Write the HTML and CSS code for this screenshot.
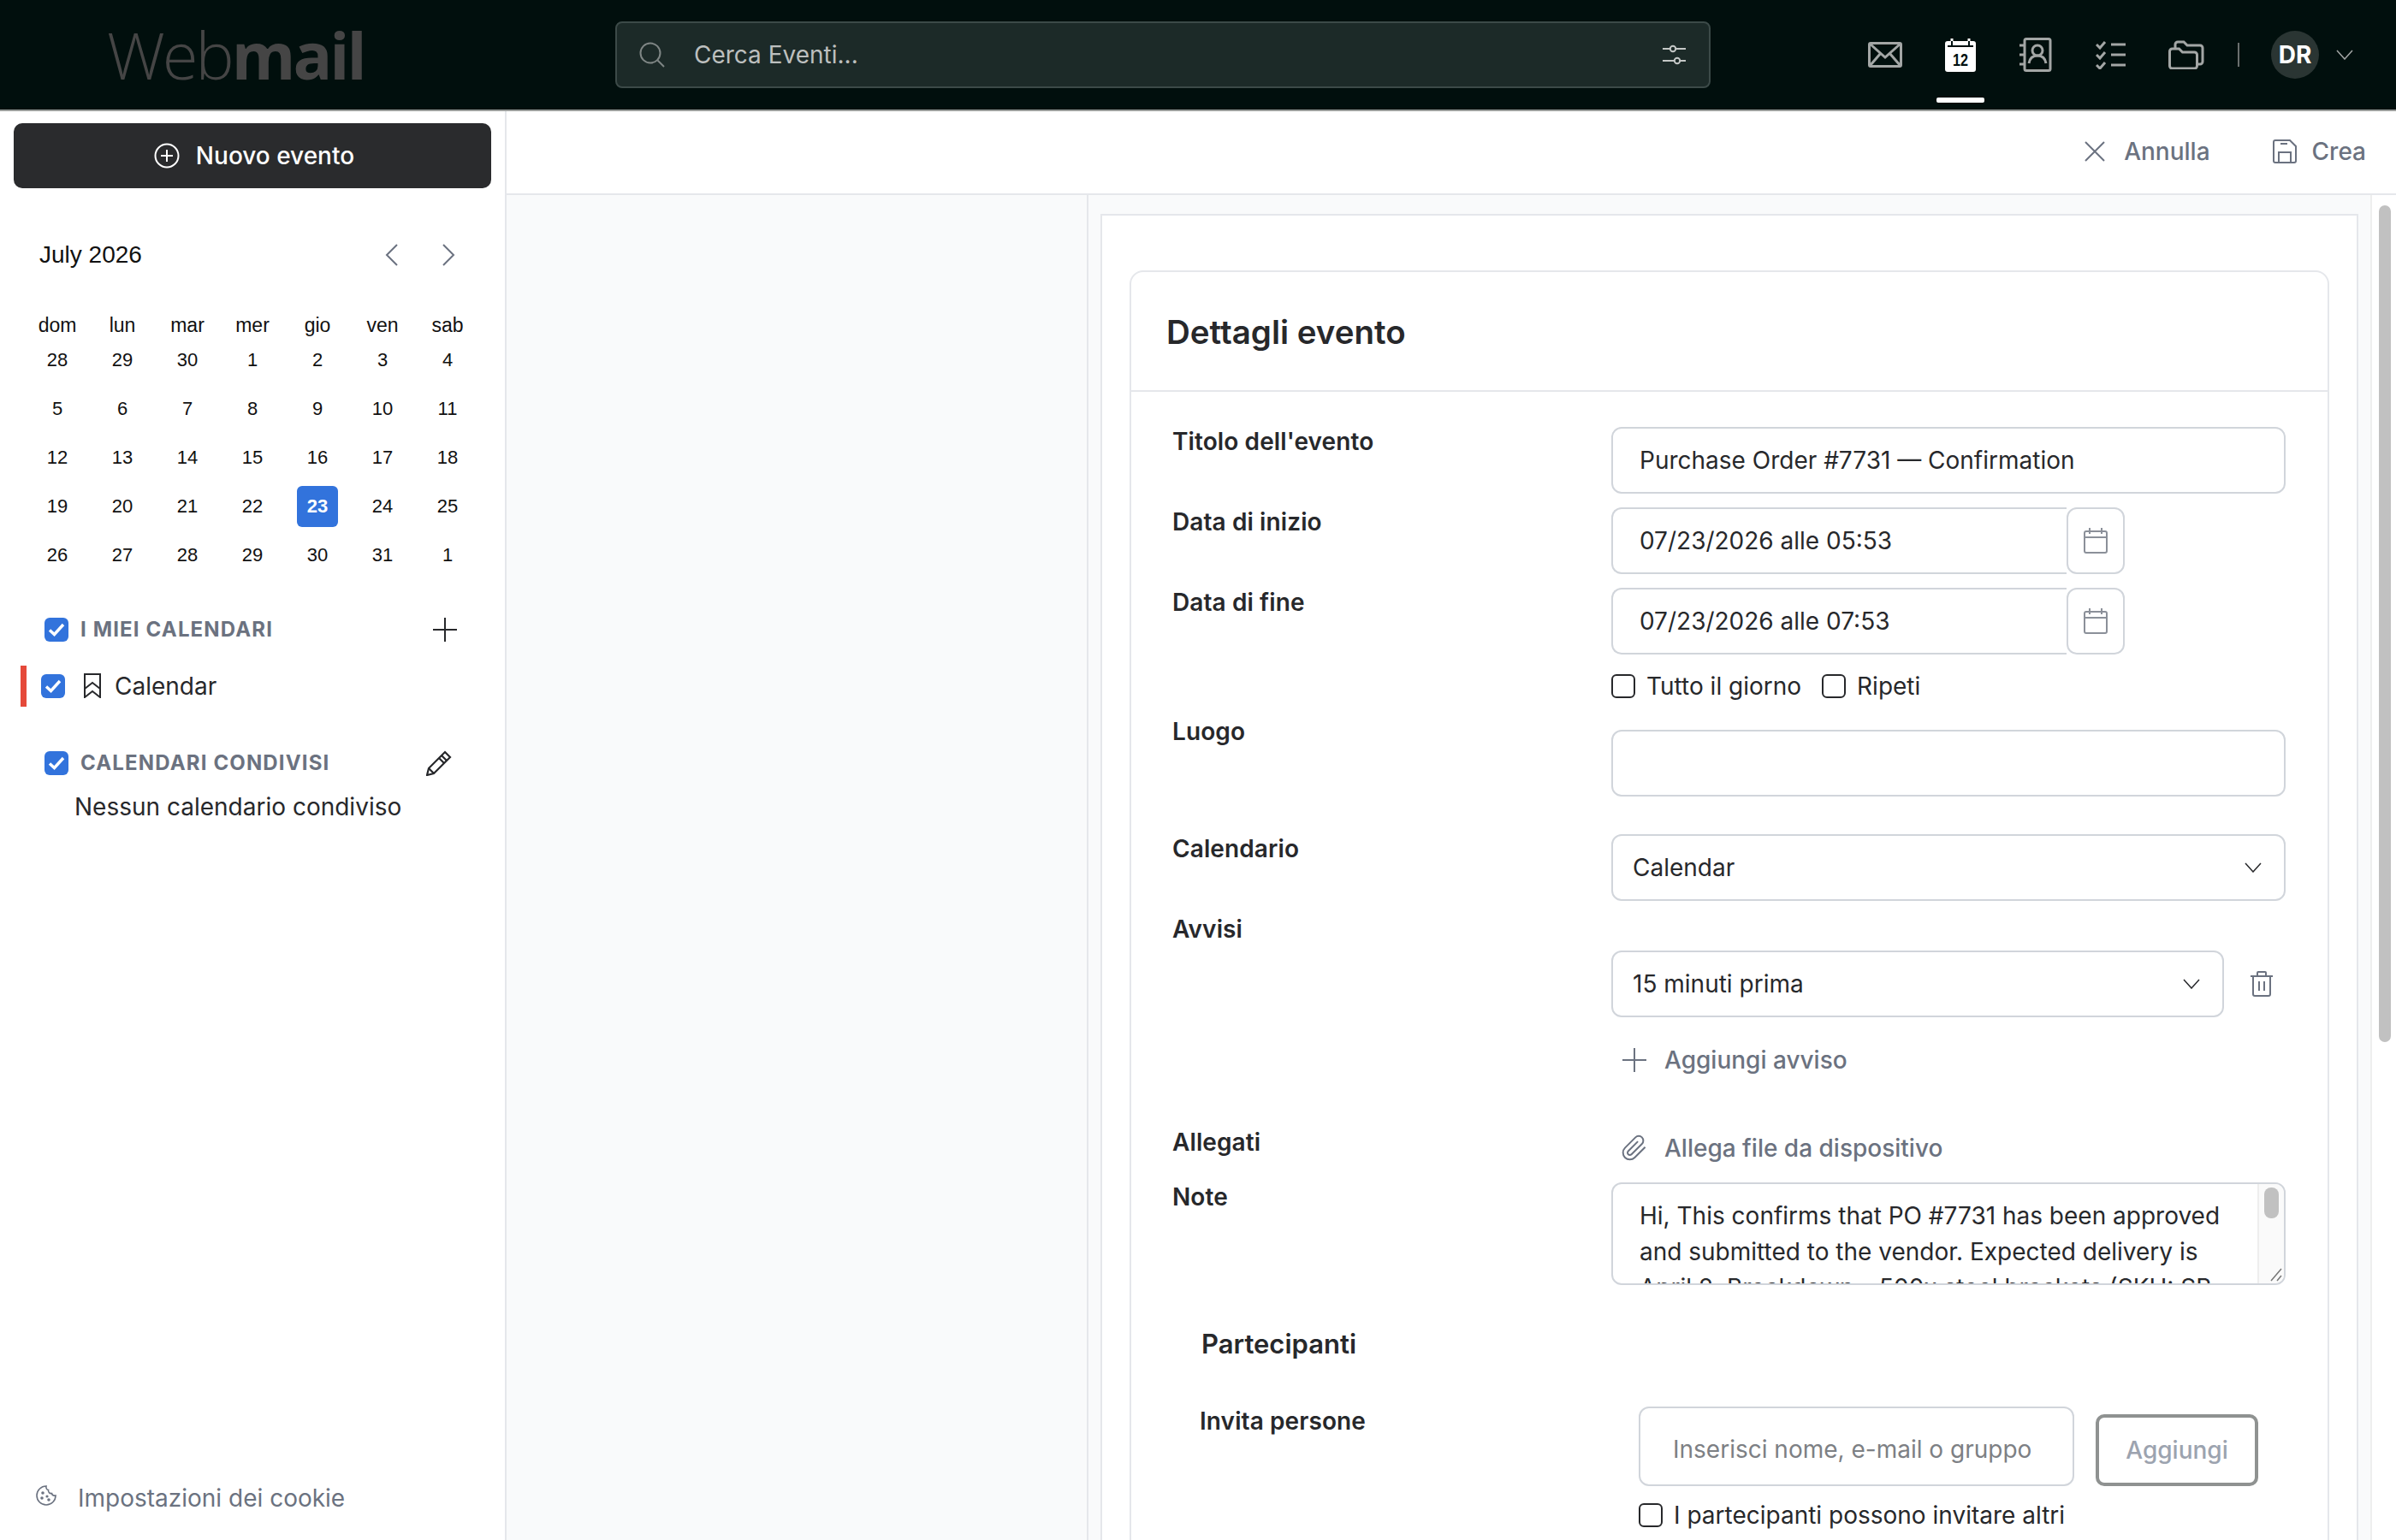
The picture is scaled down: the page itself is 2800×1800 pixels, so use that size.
FILE: index.html
```html
<!DOCTYPE html>
<html lang="it">
  <head>
    <meta charset="UTF-8" />
    <title>Webmail</title>
    <link rel="stylesheet" href="styles.css">
  </head>
  <body>
    <header class="topbar">
      <div class="logo"><span class="logo-light">Web</span><span class="logo-bold">mail</span></div>
      <div class="search">
        <svg class="search-icon" width="30" height="30" viewBox="0 0 30 30" fill="none" stroke="#7f8685" stroke-width="2"><circle cx="13" cy="13" r="11.5"/><path d="M21.5 21.5 29 29"/></svg>
        <span class="search-text">Cerca Eventi...</span>
        <svg class="search-filter" width="28" height="24" viewBox="0 0 28 24" fill="none" stroke="#c4c7c6" stroke-width="2"><path d="M0 5h9M15 5h12M0 19h13M20 19h7"/><circle cx="12" cy="5" r="3.2"/><circle cx="17" cy="19" r="3.2"/></svg>
      </div>
      <nav class="apps">
        <div class="app">
          <svg width="40" height="30" viewBox="0 0 40 30" fill="none" stroke="#a3a6a5" stroke-width="3"><rect x="1.5" y="1.5" width="37" height="27" rx="1.5"/><path d="M2 2 20 18 38 2M2 28 15 13M38 28 25 13"/></svg>
        </div>
        <div class="app active">
          <svg width="36" height="40" viewBox="0 0 36 40"><rect x="0" y="4" width="36" height="36" rx="3" fill="#fff"/><path d="M8 1v9M28 1v9" stroke="#fff" stroke-width="3"/><path d="M8 4v5M28 4v5M3 10h30" stroke="#001010" stroke-width="2"/><text x="18" y="33" text-anchor="middle" textLength="18" lengthAdjust="spacingAndGlyphs" class="app-date">12</text></svg>
        </div>
        <div class="app">
          <svg width="38" height="40" viewBox="0 0 38 40" fill="none" stroke="#a3a6a5" stroke-width="3"><rect x="6" y="1.5" width="30" height="37" rx="2"/><path d="M0 9h6M0 20h6M0 31h6"/><circle cx="21" cy="15" r="6"/><path d="M11 30c1-6 5-9 10-9s9 3 10 9"/></svg>
        </div>
        <div class="app">
          <svg width="36" height="34" viewBox="0 0 36 34" fill="none" stroke="#a3a6a5" stroke-width="3"><path d="M1 5l4 4 6-7M1 17l4 4 6-7M1 29l4 4 6-7"/><path d="M18 5h17M18 17h17M18 29h17"/></svg>
        </div>
        <div class="app">
          <svg width="42" height="34" viewBox="0 0 42 34" fill="none" stroke="#a3a6a5" stroke-width="3"><path d="M1.5 13a3 3 0 0 1 3-3h8l4 4h14a3 3 0 0 1 3 3v13a3 3 0 0 1-3 3h-26a3 3 0 0 1-3-3z"/><path d="M8 9V5a3 3 0 0 1 3-3h7l4 4h15a3 3 0 0 1 3 3v16a3 3 0 0 1-3 3h-3"/></svg>
        </div>
      </nav>
      <div class="topbar-sep"></div>
      <div class="avatar">DR</div>
      <svg class="avatar-caret" width="20" height="12" viewBox="0 0 20 12" fill="none" stroke="#a3a6a5" stroke-width="1.5"><path d="M1 1l9 10 9-10"/></svg>
    </header>

    <div class="app-body">
      <aside class="sidebar">
        <button class="new-event">
          <svg width="30" height="30" viewBox="0 0 30 30" fill="none" stroke="#fff" stroke-width="2"><circle cx="15" cy="15" r="13.5"/><path d="M15 8v14M8 15h14"/></svg>
          Nuovo evento
        </button>

        <div class="month-head">
          <span class="month-name">July 2026</span>
          <div class="month-nav">
            <svg width="16" height="26" viewBox="0 0 16 26" fill="none" stroke="#6b7280" stroke-width="2"><path d="M14 1 2 13l12 12"/></svg>
            <svg width="16" height="26" viewBox="0 0 16 26" fill="none" stroke="#6b7280" stroke-width="2"><path d="M2 1l12 12L2 25"/></svg>
          </div>
        </div>

        <div class="weekdays">
          <span>dom</span><span>lun</span><span>mar</span><span>mer</span><span>gio</span><span>ven</span><span>sab</span>
        </div>
        <div class="days">
          <span>28</span><span>29</span><span>30</span><span>1</span><span>2</span><span>3</span><span>4</span>
          <span>5</span><span>6</span><span>7</span><span>8</span><span>9</span><span>10</span><span>11</span>
          <span>12</span><span>13</span><span>14</span><span>15</span><span>16</span><span>17</span><span>18</span>
          <span>19</span><span>20</span><span>21</span><span>22</span><span class="today">23</span><span>24</span><span>25</span>
          <span>26</span><span>27</span><span>28</span><span>29</span><span>30</span><span>31</span><span>1</span>
        </div>

        <div class="cal-section first">
          <span class="check on"><svg width="20" height="16" viewBox="0 0 20 16" fill="none" stroke="#fff" stroke-width="3.4"><path d="M2 8.5l5.5 5L18 2"/></svg></span>
          <span class="cal-title">I MIEI CALENDARI</span>
          <svg class="cal-action" width="28" height="28" viewBox="0 0 28 28" fill="none" stroke="#27282b" stroke-width="2"><path d="M14 0v28M0 14h28"/></svg>
        </div>
        <div class="cal-row">
          <span class="cal-bar"></span>
          <span class="check on"><svg width="20" height="16" viewBox="0 0 20 16" fill="none" stroke="#fff" stroke-width="3.4"><path d="M2 8.5l5.5 5L18 2"/></svg></span>
          <svg class="cal-mark" width="20" height="29" viewBox="0 0 20 29" fill="none" stroke="#27282b" stroke-width="2"><path d="M1 1h18v27l-9-7-9 7z"/><path d="M1 18l9-7 9 7"/></svg>
          <span>Calendar</span>
        </div>
        <div class="cal-section second">
          <span class="check on"><svg width="20" height="16" viewBox="0 0 20 16" fill="none" stroke="#fff" stroke-width="3.4"><path d="M2 8.5l5.5 5L18 2"/></svg></span>
          <span class="cal-title">CALENDARI CONDIVISI</span>
          <svg class="cal-action pencil" width="30" height="30" viewBox="0 0 30 30" fill="none" stroke="#27282b" stroke-width="2.2"><path d="M22 2l6 6L9 27l-8 2 2-8z"/><path d="M18 6l6 6M15 9l6 6M3 21l6 6"/></svg>
        </div>
        <div class="no-shared">Nessun calendario condiviso</div>

        <div class="cookie">
          <svg width="24" height="24" viewBox="0 0 24 24" fill="none" stroke="#6b7280" stroke-width="1.6"><path d="M12 1a11 11 0 1 0 11 11c-2 .5-4-.5-4.500-2.500C16 10 14 8 14.500 5.500 12.500 5.500 11.500 3 12 1z"/><circle cx="8" cy="9" r="1" fill="#6b7280"/><circle cx="7" cy="15" r="1" fill="#6b7280"/><circle cx="13" cy="13" r=".8" fill="#6b7280"/><circle cx="15" cy="17" r="1" fill="#6b7280"/></svg>
          <span>Impostazioni dei cookie</span>
        </div>
      </aside>

      <main class="main">
        <div class="toolbar">
          <button class="tool-btn">
            <svg width="24" height="24" viewBox="0 0 24 24" fill="none" stroke="#6b7280" stroke-width="2"><path d="M1 1l22 22M23 1 1 23"/></svg>
            Annulla
          </button>
          <button class="tool-btn save">
            <svg width="28" height="28" viewBox="0 0 28 28" fill="none" stroke="#6b7280" stroke-width="2"><path d="M3 1h17l7 7v17a2 2 0 0 1-2 2H3a2 2 0 0 1-2-2V3a2 2 0 0 1 2-2z"/><path d="M7 27V15h14v12M9 5h8"/></svg>
            Crea
          </button>
        </div>

        <div class="workspace">
          <div class="side-pane"></div>
          <div class="form-pane">
            <div class="sheet">
              <section class="card">
                <h2 class="card-title">Dettagli evento</h2>
                <div class="card-body">
                  <div class="row">
                    <label class="row-label">Titolo dell'evento</label>
                    <input class="field" value="Purchase Order #7731 — Confirmation">
                  </div>
                  <div class="row">
                    <label class="row-label">Data di inizio</label>
                    <div class="date-field">
                      <input class="field" value="07/23/2026 alle 05:53">
                      <span class="date-addon">
                        <svg width="28" height="30" viewBox="0 0 28 30" fill="none" stroke="#8b9099" stroke-width="2"><rect x="1" y="4" width="26" height="25" rx="2"/><path d="M1 11h26M7 0v7M21 0v7"/></svg>
                      </span>
                    </div>
                  </div>
                  <div class="row tight">
                    <label class="row-label">Data di fine</label>
                    <div class="date-field">
                      <input class="field" value="07/23/2026 alle 07:53">
                      <span class="date-addon">
                        <svg width="28" height="30" viewBox="0 0 28 30" fill="none" stroke="#8b9099" stroke-width="2"><rect x="1" y="4" width="26" height="25" rx="2"/><path d="M1 11h26M7 0v7M21 0v7"/></svg>
                      </span>
                    </div>
                  </div>
                  <div class="row checks-row">
                    <span></span>
                    <div class="checks">
                      <span class="check"></span><span class="check-text">Tutto il giorno</span>
                      <span class="check"></span><span class="check-text">Ripeti</span>
                    </div>
                  </div>
                  <div class="row wide-gap">
                    <label class="row-label luogo-label">Luogo</label>
                    <input class="field">
                  </div>
                  <div class="row">
                    <label class="row-label">Calendario</label>
                    <div class="select">
                      Calendar
                      <svg width="20" height="12" viewBox="0 0 20 12" fill="none" stroke="#27282b" stroke-width="1.5"><path d="M1 1l9 10 9-10"/></svg>
                    </div>
                  </div>
                  <div class="row alerts-row">
                    <label class="row-label">Avvisi</label>
                    <div class="alerts">
                      <div class="alert-line">
                        <div class="select">
                          15 minuti prima
                          <svg width="20" height="12" viewBox="0 0 20 12" fill="none" stroke="#27282b" stroke-width="1.5"><path d="M1 1l9 10 9-10"/></svg>
                        </div>
                        <svg class="trash" width="28" height="30" viewBox="0 0 28 30" fill="none" stroke="#6b7280" stroke-width="2"><path d="M1 6h26M9 6V2a1 1 0 0 1 1-1h8a1 1 0 0 1 1 1v4M4 6v21a2 2 0 0 0 2 2h16a2 2 0 0 0 2-2V6M11 12v11M17 12v11"/></svg>
                      </div>
                      <div class="link-line add-alert">
                        <svg width="28" height="28" viewBox="0 0 28 28" fill="none" stroke="#6b7280" stroke-width="2"><path d="M14 0v28M0 14h28"/></svg>
                        Aggiungi avviso
                      </div>
                    </div>
                  </div>
                  <div class="row attach-row">
                    <label class="row-label">Allegati</label>
                    <div class="link-line">
                      <svg class="clip" width="32" height="32" viewBox="0 0 24 24" fill="none" stroke="#6b7280" stroke-width="1.5"><path d="M21.44 11.05l-9.19 9.19a6 6 0 0 1-8.49-8.49l9.19-9.19a4 4 0 0 1 5.66 5.66l-9.2 9.19a2 2 0 0 1-2.83-2.83l8.49-8.48"/></svg>
                      Allega file da dispositivo
                    </div>
                  </div>
                  <div class="row">
                    <label class="row-label">Note</label>
                    <div class="notes">
                      <p class="notes-text">Hi, This confirms that PO #7731 has been approved and submitted to the vendor. Expected delivery is April 2. Breakdown – 500x steel brackets (SKU: SB-100)</p>
                      <div class="notes-bar"><span class="notes-thumb"></span></div>
                      <svg class="notes-grip" width="14" height="16" viewBox="0 0 14 16" fill="none" stroke="#777" stroke-width="1.500"><path d="M13 1 1 15M13 9l-5 6"/></svg>
                    </div>
                  </div>

                  <h3 class="people-title">Partecipanti</h3>
                  <div class="row invite-row">
                    <label class="row-label">Invita persone</label>
                    <div class="invite">
                      <input class="field invite-input" placeholder="Inserisci nome, e-mail o gruppo">
                      <button class="invite-btn">Aggiungi</button>
                    </div>
                  </div>
                  <div class="row invite-row invite-check">
                    <span></span>
                    <div class="checks">
                      <span class="check"></span><span class="check-text">I partecipanti possono invitare altri</span>
                    </div>
                  </div>
                </div>
              </section>
            </div>
          </div>
          <div class="scrollbar"><span class="scroll-thumb"></span></div>
        </div>
      </main>
    </div>
  </body>
</html>
```

FILE: styles.css
```css
* {
  box-sizing: border-box;
}

body {
  margin: 0;
  width: 2800px;
  height: 1800px;
  overflow: hidden;
  font-family: "Inter", "Liberation Sans", sans-serif;
  font-size: 28px;
  color: #27282b;
  background-color: #fff;
}

/* top bar */
.topbar {
  display: flex;
  align-items: center;
  height: 130px;
  background-color: #010f0d;
  border-bottom: 2px solid #9a9d9b;
}

.logo {
  width: 719px;
  padding-left: 125px;
  font-family: "Open Sans", sans-serif;
  font-size: 76px;
  line-height: 1;
  letter-spacing: -3px;
  color: #454545;
}

.logo-light {
  font-weight: 300;
}

.logo-bold {
  font-weight: 700;
}

.search {
  display: flex;
  align-items: center;
  width: 1280px;
  height: 78px;
  padding: 0 26px 0 26px;
  background-color: #1c2a28;
  border: 2px solid #3c4a48;
  border-radius: 8px;
}

.search-text {
  flex: 1;
  margin-left: 34px;
  color: #bcbfbe;
}

.apps {
  display: flex;
  margin-left: 160px;
}

.app {
  position: relative;
  display: flex;
  align-items: center;
  justify-content: center;
  width: 88px;
  height: 128px;
}

.app.active::after {
  content: "";
  position: absolute;
  left: 16px;
  right: 16px;
  bottom: 8px;
  height: 6px;
  border-radius: 2px;
  background-color: #fff;
}

.app-date {
  font-family: "Liberation Sans", sans-serif;
  font-size: 20px;
  font-weight: 700;
  fill: #001010;
}

.topbar-sep {
  width: 2px;
  height: 28px;
  margin-left: 16px;
  background-color: #6a6f6e;
}

.avatar {
  display: flex;
  align-items: center;
  justify-content: center;
  width: 56px;
  height: 56px;
  margin-left: 37px;
  border-radius: 50%;
  background-color: #2a3533;
  color: #fff;
  font-weight: 700;
}

.avatar-caret {
  margin-left: 20px;
}

/* page */
.app-body {
  display: flex;
  height: 1670px;
}

.sidebar {
  display: flex;
  flex-direction: column;
  width: 592px;
  border-right: 2px solid #e5e7eb;
}

.new-event {
  display: flex;
  align-items: center;
  justify-content: center;
  gap: 19px;
  width: 558px;
  height: 76px;
  margin: 14px 0 0 16px;
  padding: 0 0 0 4px;
  border: 0;
  border-radius: 10px;
  background-color: #2a2b2d;
  color: #fff;
  font-family: inherit;
  font-size: 28px;
  font-weight: 500;
}

.month-head {
  display: flex;
  align-items: center;
  justify-content: space-between;
  height: 40px;
  margin: 58px 58px 0 46px;
  font-family: "Liberation Sans", sans-serif;
  font-size: 28px;
  color: #111;
}

.month-nav {
  display: flex;
  gap: 50px;
}

.weekdays,
.days {
  display: grid;
  grid-template-columns: repeat(7, 76px);
  width: 532px;
  margin-left: 29px;
  font-family: "Liberation Sans", sans-serif;
  font-size: 22px;
  text-align: center;
  color: #111;
}

.weekdays {
  height: 25px;
  margin-top: 50px;
  font-size: 23px;
  line-height: 25px;
}

.days {
  grid-auto-rows: 56.8px;
}

.days span {
  display: flex;
  align-items: center;
  justify-content: center;
}

.days .today {
  width: 48px;
  height: 48px;
  margin: auto;
  border-radius: 6px;
  background-color: #3273dc;
  color: #fff;
  font-weight: 700;
}

.check {
  display: inline-flex;
  flex: none;
  align-items: center;
  justify-content: center;
  width: 28px;
  height: 28px;
  border: 2px solid #27282b;
  border-radius: 6px;
}

.check.on {
  border: 0;
  background-color: #3273dc;
}

.cal-section {
  display: flex;
  align-items: center;
  height: 40px;
  padding: 0 56px 0 52px;
}

.cal-section.first {
  margin-top: 39px;
}

.cal-section.second {
  margin-top: 46px;
}

.cal-title {
  flex: 1;
  margin-left: 14px;
  font-size: 24px;
  font-weight: 700;
  letter-spacing: 1.15px;
  color: #6b7280;
}

.cal-action {
  flex: none;
}

.pencil {
  margin-right: 6px;
}

.cal-row {
  display: flex;
  align-items: center;
  height: 48px;
  margin: 22px 0 0 24px;
}

.cal-bar {
  width: 7px;
  height: 48px;
  margin-right: 17px;
  background-color: #e5493a;
}

.cal-mark {
  margin: 0 16px 0 22px;
}

.no-shared {
  margin: 13px 0 0 87px;
  line-height: 36px;
}

.cookie {
  display: flex;
  align-items: center;
  gap: 25px;
  margin: auto 0 31px 42px;
  line-height: 36px;
  color: #6b7280;
}

.cookie svg {
  margin-bottom: 6px;
}

/* main column */
.main {
  display: flex;
  flex-direction: column;
  flex: 1;
  min-width: 0;
}

.toolbar {
  display: flex;
  flex: none;
  align-items: center;
  justify-content: flex-end;
  gap: 73px;
  height: 98px;
  padding: 0 35px 2px 0;
  border-bottom: 2px solid #e5e7eb;
}

.tool-btn {
  display: flex;
  align-items: center;
  gap: 22px;
  padding: 0;
  border: 0;
  background: none;
  color: #6b7280;
  font-family: inherit;
  font-size: 28px;
  font-weight: 500;
}

.tool-btn.save {
  gap: 18px;
}

.workspace {
  display: flex;
  flex: 1;
  min-height: 0;
  background-color: #f9fafb;
}

.side-pane {
  width: 680px;
  border-right: 2px solid #e5e7eb;
}

.form-pane {
  flex: 1;
  min-width: 0;
  padding: 22px 14px 0;
  overflow: hidden;
}

.sheet {
  padding: 64px 32px 0;
  background-color: #fff;
  border: 2px solid #e5e7eb;
  border-bottom: 0;
}

.card {
  border: 2px solid #e5e7eb;
  border-radius: 16px;
}

.card-title {
  height: 140px;
  margin: 0;
  padding: 0 0 0 41px;
  border-bottom: 2px solid #e5e7eb;
  font-size: 38.500px;
  font-weight: 600;
  line-height: 140px;
  color: #27282b;
}

.card-body {
  padding: 41px 49px 100px 48px;
}

.row {
  display: grid;
  grid-template-columns: 513px 1fr;
  margin-bottom: 16px;
}

.row.tight {
  margin-bottom: 19px;
}

.row-label {
  font-weight: 600;
  line-height: 34px;
  letter-spacing: 0.1px;
}

.luogo-label {
  margin-top: -15px;
}

.field {
  width: 100%;
  height: 78px;
  padding: 0 31px;
  border: 2px solid #d1d5db;
  border-radius: 12px;
  background-color: #fff;
  font-family: inherit;
  font-size: 28px;
  color: #27282b;
}

.date-field {
  display: flex;
  width: 600px;
}

.date-field .field {
  flex: 1;
  min-width: 0;
  border-right: 0;
  border-radius: 12px 0 0 12px;
}

.date-addon {
  display: flex;
  flex: none;
  align-items: center;
  justify-content: center;
  width: 68px;
  border: 2px solid #d1d5db;
  border-radius: 12px;
}

.checks-row {
  height: 36px;
  margin-bottom: 33px;
}

.checks {
  display: flex;
  align-items: center;
  height: 36px;
}

.check-text {
  margin: 0 24px 0 13px;
}

.wide-gap {
  margin-bottom: 44px;
}

.select {
  display: flex;
  align-items: center;
  justify-content: space-between;
  height: 78px;
  padding: 0 26px 0 23px;
  border: 2px solid #d1d5db;
  border-radius: 12px;
}

.alerts-row {
  margin-bottom: 55px;
}

.alerts {
  padding-top: 42px;
}

.alert-line {
  display: flex;
  align-items: center;
}

.alert-line .select {
  width: 716px;
}

.trash {
  margin-left: 30px;
}

.link-line {
  display: flex;
  align-items: center;
  gap: 21px;
  height: 48px;
  padding-left: 13px;
  font-weight: 500;
  color: #6b7280;
}

.clip {
  margin: 0 -2px;
}

.add-alert {
  margin-top: 26px;
}

.notes {
  position: relative;
  height: 120px;
  padding: 16px 60px 0 31px;
  overflow: hidden;
  border: 2px solid #d1d5db;
  border-radius: 12px;
}

.notes-text {
  margin: 0;
  line-height: 42px;
}

.notes-bar {
  position: absolute;
  top: 0;
  right: 0;
  bottom: 0;
  width: 31px;
  padding: 4px 6px;
  background-color: #fafafa;
  border-left: 2px solid #eee;
}

.notes-thumb {
  display: block;
  height: 36px;
  border-radius: 8px;
  background-color: #c1c1c1;
}

.notes-grip {
  position: absolute;
  right: 2px;
  bottom: 2px;
}

.people-title {
  margin: 49px 0 53px 34px;
  font-size: 31px;
  font-weight: 600;
  line-height: 40px;
}

.invite-row {
  grid-template-columns: 513px 1fr;
  margin-left: 32px;
}

.invite {
  display: flex;
  align-items: flex-end;
  gap: 25px;
}

.invite-input {
  width: 509px;
  height: 93px;
  padding: 6px 38px 0;
}

.invite-input::placeholder {
  color: #7d8084;
  opacity: 1;
}

.invite-btn {
  width: 190px;
  height: 84px;
  border: 4px solid #8f9291;
  border-radius: 10px;
  background-color: #fff;
  color: #9ca3af;
  font-family: inherit;
  font-size: 28px;
  font-weight: 500;
}

.scrollbar {
  flex: none;
  width: 30px;
  padding: 12px 6px 0 8px;
  background-color: #fff;
  border-left: 2px solid #eee;
}

.scroll-thumb {
  display: block;
  height: 978px;
  border-radius: 8px;
  background-color: #c1c1c1;
}
```
